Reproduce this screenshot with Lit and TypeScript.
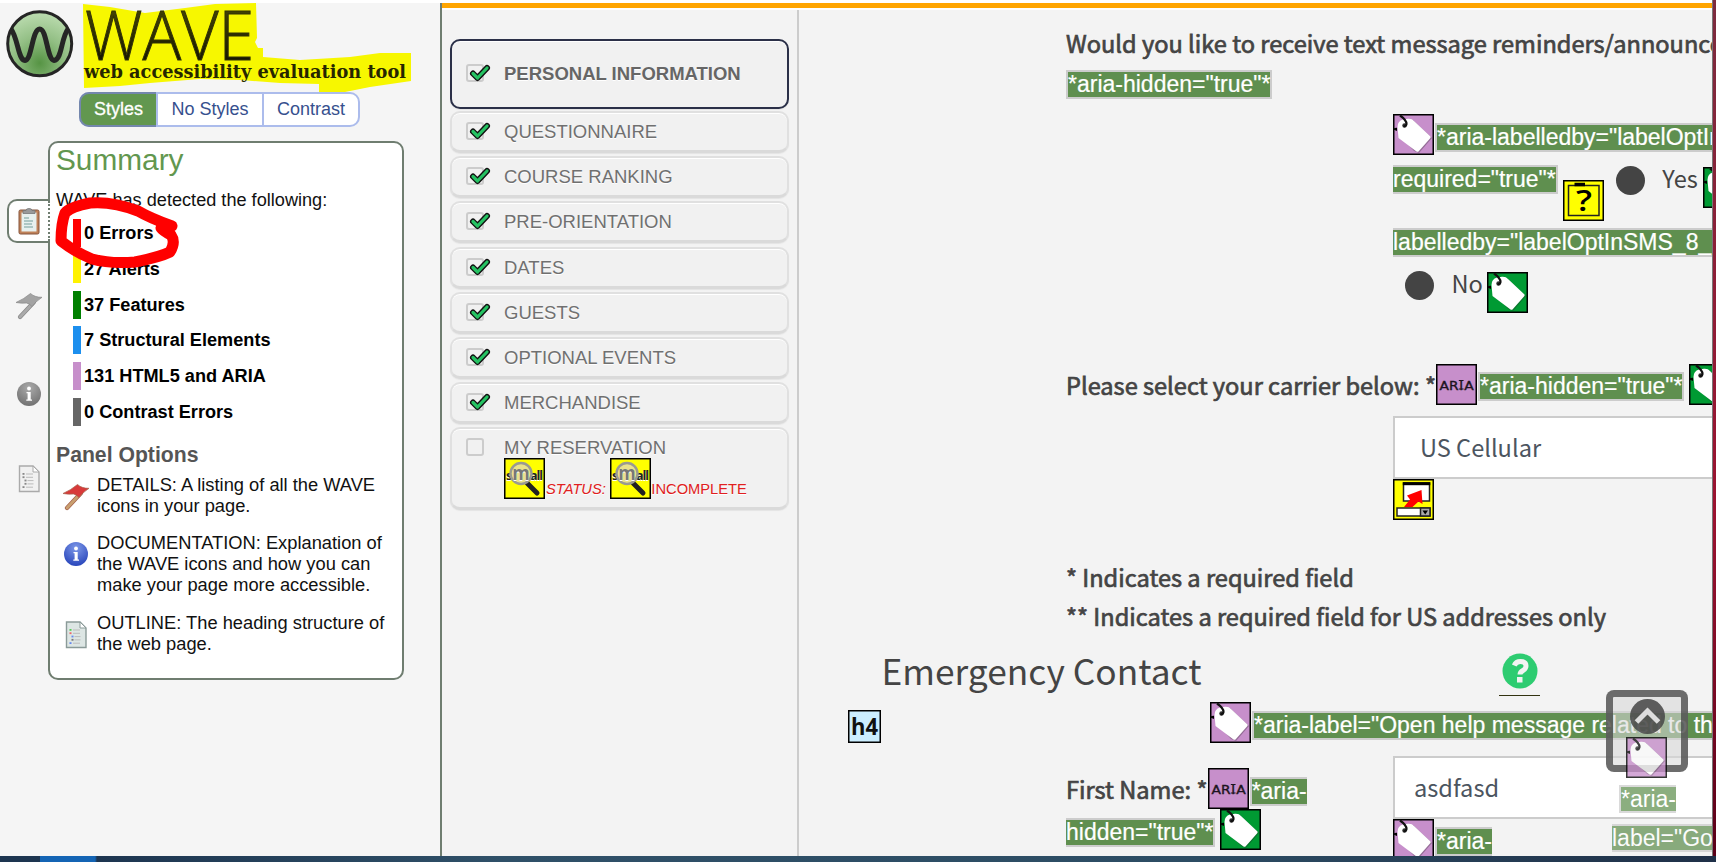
import { LitElement, html, css, svg } from "lit";
import { customElement, property } from "lit/decorators.js";

@customElement("wave-icon")
class WaveIcon extends LitElement {
  @property() kind = "tag";
  @property() tone = "#c78fcb";

  static styles = css`
    :host { display: block; flex: none; width: 41px; height: 41px; }
    :host([kind="h4"]) { width: 33px; height: 33px; }
    svg { display: block; width: 100%; height: 100%; }
    .small { font: bold 12.5px "Open Sans", sans-serif; fill: #222; }
    .glass { font: bold 20px "Open Sans", sans-serif; fill: #777; }
    .aria { font: 400 13px "DejaVu Sans", sans-serif; fill: #1c1420; stroke: #1c1420; stroke-width: .4px; }
    .h4 { font: bold 23px "Open Sans", sans-serif; fill: #111; }
    .ask { font: 600 29px "Open Sans", sans-serif; fill: #000; }
  `;

  private box(fill: string) {
    return svg`<rect x=".75" y=".75" width="39.5" height="39.5" fill=${fill} stroke="#000" stroke-width="1.500"/>`;
  }

  render() {
    switch (this.kind) {
      case "aria":
        return html`<svg viewBox="0 0 41 41">${this.box("#c78fcb")}
          <text class="aria" x="3.5" y="25.5" textLength="19" lengthAdjust="spacingAndGlyphs">AR</text>
          <text class="aria" x="23.300" y="25.500">I</text><path d="M22.800 16.500 H27.600 M22.800 25 H27.600" stroke="#1c1420" stroke-width="1.200"/>
          <text class="aria" x="28.300" y="25.5" textLength="9.500" lengthAdjust="spacingAndGlyphs">A</text></svg>`;
      case "small":
        return html`<svg viewBox="0 0 41 41">${this.box("#ff0")}
          <text class="small" x="2" y="21.5" textLength="6.500">s</text>
          <text class="small" x="26" y="21.5" textLength="13">all</text>
          <path d="M23 25 L33 35" stroke="#222" stroke-width="5" stroke-linecap="round"/>
          <circle cx="17" cy="15.5" r="10.5" fill="#e9e28c" stroke="#9a9a90" stroke-width="2.4"/>
          <text class="glass" x="8.3" y="21.5" textLength="17.5" lengthAdjust="spacingAndGlyphs">m</text></svg>`;
      case "legend":
        return html`<svg viewBox="0 0 41 41">${this.box("#ff0")}
          <rect x="5.500" y="5.500" width="30.500" height="30" fill="none" stroke="#222" stroke-width="1.5"/>
          <path d="M11.500 4.500 H22" stroke="#000" stroke-width="3.5"/>
          <text class="ask" x="13" y="31" textLength="16" lengthAdjust="spacingAndGlyphs">?</text></svg>`;
      case "jump":
        return html`<svg viewBox="0 0 41 41">${this.box("#ff0")}
          <rect x="10.500" y="4" width="26" height="18" fill="#fff" stroke="#222" stroke-width="1.500"/>
          <rect x="9.800" y="3.200" width="27.500" height="3" fill="#000"/>
          <rect x="4" y="29" width="33" height="8" fill="#fff" stroke="#222" stroke-width="1.500"/>
          <rect x="27.500" y="29" width="9.500" height="8" fill="#aaa" stroke="#222" stroke-width="1.5"/>
          <path d="M29.500 31.500 H35 L32.200 35.500 Z" fill="#000"/>
          <path d="M11 28 L17 20.500 L14 16.500 L28.500 11 L29.500 25 L25.500 22.500 L19.500 28 Z" fill="#f00"/></svg>`;
      case "h4":
        return html`<svg viewBox="0 0 33 33">
          <rect x=".75" y=".75" width="31.5" height="31.5" fill="#cceeff" stroke="#000" stroke-width="1.500"/>
          <text class="h4" x="3" y="25" textLength="27" lengthAdjust="spacingAndGlyphs">h4</text></svg>`;
      default:
        return html`<svg viewBox="0 0 41 41">${this.box(this.tone)}
          <path d="M7 13 Q6 6 12 6 L20 6 L39 24 L26 39 L21 37 L7 22 Z" fill="#222" opacity=".3"/>
          <path d="M4.500 13 Q4.500 7 10 5.500 L15 4.800 Q19 4.500 21 7 L37.500 22.500 Q38 23.500 37 24.500 L25.500 37.500 Q24.500 38.200 23.500 37.500 L5.500 24 Z" fill="#fff"/>
          <circle cx="11.500" cy="11.500" r="2.200" fill="#333"/>
          <path d="M7 1.500 Q13.500 6 13.500 10 Q13 12.500 10.500 12" stroke="#111" stroke-width="2.200" fill="none"/>
          <path d="M1 15 L3.500 14 V16.500 Z" fill="#000" stroke="#000"/></svg>`;
    }
  }
}

@customElement("wave-sidebar")
class WaveSidebar extends LitElement {
  static styles = css`
    :host { display: flex; flex-direction: column; height: 100%; position: relative; box-sizing: border-box;
      background: #f5f5f5; font: 18.3px/21px "Liberation Sans", Arial, sans-serif; color: #111; border-right: 2px solid #6f7d70; }
    .logo { display: block; flex: none; width: 440px; height: 89px; }
    .name { font: 300 69px "Open Sans", sans-serif; fill: url(#ink); stroke: #333305; stroke-width: 1px; }
    .tagline { font: bold 18px "DejaVu Serif", serif; fill: #262600; }
    .tabs { display: flex; align-self: flex-start; margin-left: 79px; height: 35px; box-sizing: border-box; background: #fff;
      border: 2px solid #acbcec; border-radius: 10px; color: #36508e; font-size: 18px; line-height: 31px; }
    .tab { box-sizing: border-box; text-align: center; border-left: 2px solid #acbcec; }
    .tab.on { width: 77px; margin: -2px 0 -2px -2px; border: 2px solid #7487ad; border-right: 0; border-radius: 10px 0 0 10px;
      background: #62974f; color: #fff; -webkit-text-stroke: .3px #fff; }
    .tab.off { width: 106px; }
    .tab.contrast { width: 96px; }
    .body { display: flex; margin-top: 14px; }
    .rail { width: 48px; display: flex; flex-direction: column; align-items: flex-end; padding-top: 58px; }
    .current { width: 43px; height: 44px; box-sizing: border-box; border: 2px solid #6f7d70; border-right: 0; border-radius: 10px 0 0 10px;
      background: #fff; padding: 6px 0 0 9px; margin-right: -2px; z-index: 1; position: relative; }
    .current::after { content: ""; position: absolute; right: 0; top: 0; bottom: 0; border-right: 2px dotted #6f7d70; }
    .rail .glyph { display: block; margin-right: 5px; }
    .glyph.flag { margin-top: 49px; }
    .glyph.info { margin-top: 60px; }
    .rail .glyph.doc { margin-top: 55.5px; margin-right: 5px; }
    .panel { width: 356px; height: 539px; box-sizing: border-box; border: 2px solid #6f7d70; border-radius: 10px; background: #fff; padding: 0 0 0 6px; }
    h2 { margin: 0; font: 29.8px/34px "Liberation Sans", Arial, sans-serif; color: #62974f; }
    .lead { margin: 13px 0 8px; height: 21px; font-size: 18.15px; }
    .count { display: flex; align-items: center; height: 28px; margin: 0 0 8px 17px; font-weight: bold; font-size: 18.15px; line-height: 20px; color: #000; }
    .count + .count + .count { margin-top: -.3px; margin-bottom: 8px; }
    .bar { width: 8px; height: 28px; margin-right: 3px; }
    .errors { background: #f00; } .alerts { background: #fff200; } .features { background: #008000; }
    .structure { background: #1c8fee; } .aria { background: #c78fcb; } .contrast-bar { background: #666; }
    h3 { margin: 16px 0 7px; font: bold 21.2px/25px "Liberation Sans", Arial, sans-serif; color: #555; }
    .option { display: flex; align-items: flex-start; margin-bottom: 16.5px; }
    .option .glyph { margin: 8px 7px 0 6px; flex: none; }
    .option .flag { margin-top: 9px; }
    .scribble { position: absolute; left: 40px; top: 181.5px; width: 160px; height: 100px; }
  `;

  private clipboard() {
    return html`<svg width="24" height="30" viewBox="0 0 24 30">
      <rect x="1" y="3" width="20" height="24" rx="1.5" fill="#c08259" stroke="#85543c"/>
      <rect x="3.500" y="5.500" width="15" height="19" fill="#e7f0ee"/>
      <path d="M5 3.500 H8 Q8 1.500 11 1.500 Q14 1.500 14 3.500 H17 V6.500 H5 Z" fill="#999" stroke="#777" stroke-width=".8"/>
      <path d="M6 11 H11 M6 14 H15 M6 17 H14 M6 20 H15" stroke="#9bb9b6" stroke-width="1.3"/></svg>`;
  }

  private flag(fill: string, pole: string, edge: string) {
    return html`<svg class="glyph flag" width="28" height="28" viewBox="0 0 28 28">
      <path d="M5 25 L19 10" stroke=${edge} stroke-width="4.200" stroke-linecap="round"/>
      <path d="M5 25 L19 10" stroke=${pole} stroke-width="2.800" stroke-linecap="round"/>
      <path d="M1 10.500 Q9 7 15.500 1.500 Q20 5.500 27 5.300 Q20 10 17 14.500 Q14.500 11.500 11.500 11 Q6 11.500 1 10.500 Z" fill=${fill} stroke=${edge} stroke-width=".7"/></svg>`;
  }

  private info(id: string, a: string, b: string) {
    return html`<svg class="glyph info" width="28" height="28" viewBox="0 0 28 28">
      <defs><radialGradient id=${id} cx=".5" cy=".25" r=".8"><stop offset="0" stop-color=${a}/><stop offset="1" stop-color=${b}/></radialGradient></defs>
      <circle cx="14" cy="14" r="12" fill="url(#${id})"/>
      <circle cx="14" cy="8.500" r="1.900" fill="#fff"/><path d="M11.500 12 H15.700 V19.500 H17 V20.800 H11.300 V19.500 H12.600 V13.200 H11.500 Z" fill="#fff"/></svg>`;
  }

  private doc(fill: string, edge: string, marks: string[]) {
    return html`<svg class="glyph doc" width="28" height="30" viewBox="0 0 28 30">
      <path d="M4.500 2 H18 L24 8 V27.500 H4.500 Z" fill=${fill} stroke=${edge} stroke-width="1.400"/>
      <path d="M18 2 V8 H24 Z" fill="#fff" stroke=${edge}/>
      ${marks.map((m, i) => svg`<rect x=${i > 1 && i < 4 ? 9.5 : 7.5} y=${9 + i * 3.3} width="2" height="1.800" fill=${m}/><path d="M${i > 1 && i < 4 ? 12.5 : 11} ${10 + i * 3.3} h${i > 1 && i < 4 ? 6 : 7}" stroke="#bbb"/>`)}</svg>`;
  }

  render() {
    const counts = [["errors", "0 Errors"], ["alerts", "27 Alerts"], ["features", "37 Features"],
      ["structure", "7 Structural Elements"], ["aria", "131 HTML5 and ARIA"], ["contrast-bar", "0 Contrast Errors"]];
    const grey = ["#888", "#888", "#888", "#888", "#888"];
    return html`
      <svg class="logo" viewBox="0 3 440 89">
        <defs>
          <linearGradient id="ink" x1="0" y1="0" x2="0" y2="1"><stop offset="0.150" stop-color="#4c4c05"/><stop offset=".8" stop-color="#161600"/></linearGradient>
          <radialGradient id="orb" cx=".5" cy=".8" r=".75"><stop offset="0" stop-color="#569444"/><stop offset=".55" stop-color="#93bf85"/><stop offset="1" stop-color="#b7d9ab"/></radialGradient>
        </defs>
        <circle cx="39.700" cy="43.800" r="32" fill="url(#orb)" stroke="#252525" stroke-width="3"/>
        <path d="M11 29 C18 38 18 60 25 60.500 C32 60 32 29 39.700 29 C47 29 47 60 54 60.500 C62 60 61 38 68 29" fill="none" stroke="#252525" stroke-width="5"/>
        <path d="M83 4 L110 7 L145 13 L185 8 L215 4 L256 3 L257 38 L255 42 L258 48 L263 48 L263 57 L300 60 L350 57 L380 53 L411 53 V81 L370 87 L345 92 H319 V84 L280 83 L240 80 L200 79 L150 83 L120 86 L84 88 Z" fill="#f7f700"/>
        <text class="name" x="85" y="59.500" textLength="169" lengthAdjust="spacingAndGlyphs">WAVE</text>
        <text class="tagline" x="84" y="77.500" textLength="322" lengthAdjust="spacingAndGlyphs">web accessibility evaluation tool</text>
      </svg>
      <div class="tabs"><div class="tab on">Styles</div><div class="tab off">No Styles</div><div class="tab contrast">Contrast</div></div>
      <div class="body">
        <div class="rail">
          <div class="current">${this.clipboard()}</div>
          ${this.flag("#a3a3a3", "#aaa", "#888")}
          ${this.info("gi", "#aaa", "#6e6e6e")}
          ${this.doc("#f1f1f1", "#aaa", grey)}
        </div>
        <div class="panel">
          <h2>Summary</h2>
          <p class="lead">WAVE has detected the following:</p>
          ${counts.map(([c, t]) => html`<div class="count"><span class="bar ${c}"></span>${t}</div>`)}
          <h3>Panel Options</h3>
          <div class="option">${this.flag("#d83a3a", "#c9a070", "#a5604a")}<span>DETAILS: A listing of all the WAVE<br>icons in your page.</span></div>
          <div class="option">${this.info("bi", "#7d98e8", "#2340b8")}<span>DOCUMENTATION: Explanation of<br>the WAVE icons and how you can<br>make your page more accessible.</span></div>
          <div class="option">${this.doc("#dde6e4", "#8a9a98", ["#5c5", "#e66", "#68e", "#777", "#68e"])}<span>OUTLINE: The heading structure of<br>the web page.</span></div>
        </div>
      </div>
      <svg class="scribble" viewBox="40 183 160 100">
        <path d="M172 224 Q150 216 138 209 Q112 199 90 201 Q70 205 65 211 Q61 222 61 239 Q75 250 92 257 Q110 262 135 260 Q160 255 170 250 Q176 240 171 233 Q163 229 161 226 Z M165 226" fill="none" stroke="#f00" stroke-width="11" stroke-linejoin="round"/>
      </svg>`;
  }
}

@customElement("step-nav")
class StepNav extends LitElement {
  static styles = css`
    :host { display: block; padding: 29px 8px 0; box-sizing: border-box; font: 18.5px/22px "Liberation Sans", Arial, sans-serif; color: #707070; text-shadow: 0 1px 0 #fff; }
    .step { display: flex; align-items: flex-start; width: 339px; height: 42px; margin-bottom: 3.2px; padding: 8px 0 0 14px; box-sizing: border-box;
      border: 2px solid #e0e0e0; border-bottom: 3px solid #dadada; border-radius: 10px; background: #f1f1f1; box-shadow: inset 0 1px 0 #fff, 0 1px 1px #e4e4e4; }
    .step.active { height: 70px; margin-bottom: 2px; padding-top: 22px; border: 2px solid #2b3048; font-weight: bold; color: #666; }
    .step.last { height: 83px; }
    .box { flex: none; width: 18px; height: 18px; margin: 1px 20px 0 0; box-sizing: border-box; border: 2px solid #ccc; border-radius: 3px; }
    .box svg { display: block; margin: -2px 0 0 2px; overflow: visible; }
    .status { display: flex; align-items: flex-end; margin-top: -1px; font-size: 14.7px; line-height: 20px; color: #e02020; }
    .status em { margin: 0 4.500px 0 1px; }
  `;

  private box(done: boolean) {
    return html`<div class="box">${done ? html`<svg width="19" height="18" viewBox="0 0 19 18">
      <path d="M3 9.500 L7.500 14 L17 4" fill="none" stroke="#111" stroke-width="6" stroke-linecap="round" stroke-linejoin="round"/>
      <path d="M3 9.500 L7.500 14 L17 4" fill="none" stroke="#25c262" stroke-width="3.200" stroke-linecap="round" stroke-linejoin="round"/></svg>` : ""}</div>`;
  }

  render() {
    const steps = ["QUESTIONNAIRE", "COURSE RANKING", "PRE-ORIENTATION", "DATES", "GUESTS", "OPTIONAL EVENTS", "MERCHANDISE"];
    return html`
      <div class="step active">${this.box(true)}PERSONAL INFORMATION</div>
      ${steps.map((s) => html`<div class="step">${this.box(true)}${s}</div>`)}
      <div class="step last">${this.box(false)}<div>MY RESERVATION
        <div class="status"><wave-icon kind="small"></wave-icon><em>STATUS:</em><wave-icon kind="small"></wave-icon><span>INCOMPLETE</span></div></div></div>`;
  }
}

@customElement("registration-form")
class RegistrationForm extends LitElement {
  static styles = css`
    :host { display: block; overflow: hidden; font: 23.6px/30px "Noto Sans CJK SC", "Noto Sans", sans-serif; color: #444; white-space: nowrap; }
    .row { display: grid; grid-template-columns: 327px 700px; margin-left: 267px; }
    .line { display: flex; align-items: flex-start; }
    .label { -webkit-text-stroke: .7px #444; }
    .star { margin-left: 5.500px; }
    .note { flex: none; box-sizing: border-box; height: 29px; border: 2px solid #ccc; background: #5f8f4f; color: #fff; font: 23px/25px "Liberation Sans", Arial, sans-serif; -webkit-text-stroke: .2px #fff; }
    .start { border-left: 0; } .end { border-right: 0; }
    .sms { height: 104px; }
    .question { padding-top: 18px; height: 42px; }
    .dot { flex: none; width: 29px; height: 29px; border-radius: 50%; background: #444; }
    .options { height: 250px; }
    .first { height: 51px; } .second { height: 62px; } .third { height: 45px; } .fourth { height: 92px; }
    .third .note { margin-top: 1px; }
    .drop8 { margin-top: 8px; } .drop9 { margin-top: 9px; } .drop15 { margin-top: 15px; } .gap1 { margin-left: 1px; } .gap5 { margin-left: 5px; }
    .raise2 { margin-top: 2px; }
    .radio { margin-left: 12px; margin-top: -1px; } .radio.yes { margin-left: 12px; margin-top: 1px; }
    .word { margin: -2px 5px 0 17.500px; }
    .fourth .word { margin: -4px 4.500px 0 17.500px; }
    .carrier { height: 52px; }
    .carrier .label { margin-top: 6px; }
    .field { box-sizing: border-box; height: 63px; border: 2px solid #ccc; background: #fff; color: #4c555f; line-height: 59px; }
    .select { padding-left: 25px; } .input { padding-left: 19px; }
    .pick { height: 142px; }
  `;

  render() {
    return html`
      <div class="sms row"><div>
        <div class="question label">Would you like to receive text message reminders/announcements?</div>
        <div class="line"><span class="note">*aria-hidden="true"*</span></div>
      </div></div>
      <div class="options row"><div></div><div>
        <div class="line first"><wave-icon></wave-icon><span class="note drop9 gap1">*aria-labelledby="labelOptInSMS_8_0" aria-</span></div>
        <div class="line second"><span class="note start">required="true"*</span><wave-icon class="drop15 gap5" kind="legend"></wave-icon>
          <span class="dot radio yes"></span><span class="word">Yes</span><wave-icon class="raise2" tone="#009a33"></wave-icon></div>
        <div class="line third"><span class="note start">labelledby="labelOptInSMS_8_1"*</span></div>
        <div class="line fourth"><span class="dot radio"></span><span class="word">No</span><wave-icon tone="#009a33"></wave-icon></div>
      </div></div>
      <div class="line row carrier"><div class="line"><span class="label">Please select your carrier below:</span><span class="label star">*</span>
        <wave-icon kind="aria"></wave-icon><span class="note drop8 gap1">*aria-hidden="true"*</span><wave-icon class="gap5" tone="#009a33"></wave-icon></div></div>
      <div class="row pick"><div></div><div><div class="field select">US Cellular</div><wave-icon kind="jump"></wave-icon></div></div>
    `;
  }
}

@customElement("contact-form")
class ContactForm extends LitElement {
  static styles = [RegistrationForm.styles, css`
    .legend { margin-left: 267px; height: 86px; line-height: 39.3px; }
    .title { display: flex; height: 58px; }
    h4 { flex: none; margin: 0; padding: 1px 0 0 82.500px; width: 617.500px; font: 400 35.3px/50px "Noto Sans CJK SC", "Noto Sans", sans-serif; }
    .help { width: 41px; height: 43px; margin-top: 9px; border-bottom: 1px solid #331; padding-left: 3px; box-sizing: border-box; }
    .heading { margin-left: 49px; height: 54px; }
    .help-note { margin-left: 329px; }
    .names { height: 100px; }
    .caption { padding-top: 12px; }
    .caption .label { margin-top: 6px; }
    .wrapped { height: 41px; }
    .below { height: 38px; overflow: hidden; }
  `];

  render() {
    return html`
      <div class="legend label">* Indicates a required field<br>** Indicates a required field for US addresses only</div>
      <div class="title"><h4>Emergency Contact</h4><div class="help">
        <svg width="36" height="36" viewBox="0 0 36 36"><circle cx="18" cy="18" r="17.500" fill="#2ecc71"/>
          <path d="M12.200 12.500 Q14 8.500 18.300 8.500 Q24 8.500 24 13 Q24 15.500 21 17.500 Q18 19.200 18 21.500" fill="none" stroke="#f3f3f3" stroke-width="5"/>
          <rect x="15" y="24" width="5.500" height="5.500" fill="#f3f3f3"/></svg></div></div>
      <div class="line heading"><wave-icon kind="h4" class="drop8"></wave-icon><wave-icon class="help-note"></wave-icon><span class="note gap1 drop9">*aria-label="Open help message related to this field"*</span></div>
      <div class="row names"><div class="caption">
        <div class="line wrapped"><span class="label">First Name:</span><span class="label star">*</span><wave-icon kind="aria"></wave-icon><span class="note end drop9 gap1">*aria-</span></div>
        <div class="line wrapped"><span class="note start drop9">hidden="true"*</span><wave-icon class="gap5" tone="#009a33"></wave-icon></div>
      </div><div>
        <div class="field input">asdfasd</div>
        <div class="line below"><wave-icon></wave-icon><span class="note end drop8 gap1">*aria-</span></div>
      </div></div>`;
  }
}

@customElement("app-root")
class AppRoot extends LitElement {
  static styles = css`
    :host { display: grid; grid-template-columns: 442px minmax(0, 1fr) 4px; grid-template-rows: 3px 853px 6px; width: 1716px; height: 862px; overflow: hidden; background: #fff; position: relative; }
    .side { grid-area: 2 / 1; }
    .page { grid-area: 2 / 2; display: grid; grid-template-columns: 355px 2px minmax(0, 1fr); grid-template-rows: 5px 2px 846px; background: #f3f3f3; overflow: hidden; position: relative; }
    .stripe { grid-column: 1 / -1; background: #ffa500; }
    .gap { grid-column: 1 / -1; background: #fff; }
    .rule { background: #ccc; }
    .forms { overflow: hidden; }
    .wall { grid-column: 3; grid-row: 1 / 3; background: linear-gradient(#7c2b3e, #9b1230 60%, #5a0018); border-left: 1px solid #777; }
    .taskbar { grid-row: 3; grid-column: 1 / -1; background: linear-gradient(90deg, #1d3550 0 40px, #1464b4 40px 95px, #1d3550 97px, #2f5068 500px, #2c4c63 1200px, #1f3048); }
    .top { position: absolute; left: 1606px; top: 690px; width: 82px; height: 82px; box-sizing: border-box; border: 7px solid rgba(70,70,70,.77); border-radius: 8px; background: rgba(215,215,215,.58); }
    .float { position: absolute; left: 1606px; top: 690px; width: 106px; height: 166px; overflow: hidden; }
    .float .arrow { display: block; margin: 8.500px 0 0 23.500px; }
    .float wave-icon { margin: 3.500px 0 0 20px; opacity: .78; }
    .soft { opacity: .72; position: relative; box-sizing: border-box; width: max-content; height: 28px; border: 2px solid #ccc; border-right: 0; background: #5f8f4f; color: #fff; font: 23px/24px "Liberation Sans", Arial, sans-serif; margin: 7px 0 0 13px; }
    .soft.next { margin: 11px 0 0 6px; border-left: 0; }
  `;

  render() {
    return html`
      <wave-sidebar class="side"></wave-sidebar>
      <div class="page">
        <div class="stripe"></div><div class="gap"></div>
        <step-nav></step-nav><div class="rule"></div>
        <div class="forms"><registration-form></registration-form><contact-form></contact-form></div>
      </div>
      <div class="wall"></div><div class="taskbar"></div>
      <div class="top"></div>
      <div class="float">
        <svg class="arrow" width="35" height="35" viewBox="0 0 35 35"><circle cx="17.500" cy="17.500" r="17.500" fill="#444" opacity=".85"/>
          <path d="M6.500 23 L17.500 12 L28.500 23" fill="none" stroke="#ddd" stroke-width="5"/></svg>
        <wave-icon></wave-icon>
        <div class="soft">*aria-</div>
        <div class="soft next">label="Go to top"*</div>
      </div>`;
  }
}
